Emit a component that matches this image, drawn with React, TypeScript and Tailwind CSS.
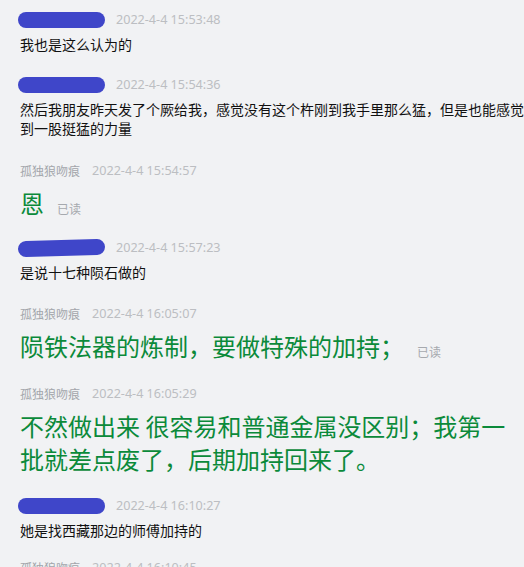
import React from 'react'

const font = { fontFamily: '"Noto Sans CJK SC", "Noto Sans", sans-serif' }
const timeFont = { fontFamily: '"Noto Sans", "Noto Sans CJK SC", sans-serif' }

type Msg = {
    mine: boolean
    time: string
    text: string
    read?: boolean
    big?: boolean
    tilt?: boolean
    top: string
}

const messages: Msg[] = [
    { mine: false, time: '2022-4-4 15:53:48', text: '我也是这么认为的', top: 'pt-[10px]' },
    {
        mine: false,
        time: '2022-4-4 15:54:36',
        text: '然后我朋友昨天发了个厥给我，感觉没有这个杵刚到我手里那么猛，但是也能感觉\n到一股挺猛的力量',
        top: 'pt-[21px]',
    },
    { mine: true, time: '2022-4-4 15:54:57', text: '恩', read: true, big: true, top: 'pt-[23px]' },
    { mine: false, time: '2022-4-4 15:57:23', text: '是说十七种陨石做的', tilt: true, top: 'pt-[19px]' },
    {
        mine: true,
        time: '2022-4-4 16:05:07',
        text: '陨铁法器的炼制，要做特殊的加持；',
        read: true,
        big: true,
        top: 'pt-[22px]',
    },
    {
        mine: true,
        time: '2022-4-4 16:05:29',
        text: '不然做出来 很容易和普通金属没区别；我第一\n批就差点废了，后期加持回来了。',
        big: true,
        top: 'pt-[22px]',
    },
    { mine: false, time: '2022-4-4 16:10:27', text: '她是找西藏那边的师傅加持的', top: 'pt-[21px]' },
    { mine: true, time: '2022-4-4 16:10:45', text: '嗯', big: true, top: 'pt-[18px]' },
]

const Header = ({ m }: { m: Msg }) => (
    <div className="flex h-5 items-center">
        {m.mine ? (
            <span className="text-[12px] text-[#a3a6ab]">孤独狼吻痕</span>
        ) : (
            <span
                className={`-ml-[2px] block h-[16px] w-[87px] rounded-full bg-[#3f46c9] ${m.tilt ? 'rotate-[-1.5deg]' : ''}`}
            />
        )}
        <span className={`text-[12.6px] text-[#bcbec2] ${m.mine ? 'ml-[12px]' : 'ml-[11px]'}`} style={timeFont}>
            {m.time}
        </span>
    </div>
)

const App = () => {
    return (
        <div className="h-[567px] w-[524px] overflow-hidden bg-[#f1f2f4] pl-5" style={font}>
            {messages.map((m, i) => (
                <div key={i} className={m.top}>
                    <Header m={m} />
                    {m.big ? (
                        <div className="mt-[5px] flex items-end">
                            <div className="whitespace-pre-line text-[24px] leading-[33px] text-[#0b8a3a]">{m.text}</div>
                            {m.read && <span className="ml-[13px] text-[12px] leading-[20px] text-[#a6a9ae]">已读</span>}
                        </div>
                    ) : (
                        <div className="mt-[5px] whitespace-pre-line text-[14px] leading-[19px] text-[#111]">{m.text}</div>
                    )}
                </div>
            ))}
        </div>
    )
}

export default App
